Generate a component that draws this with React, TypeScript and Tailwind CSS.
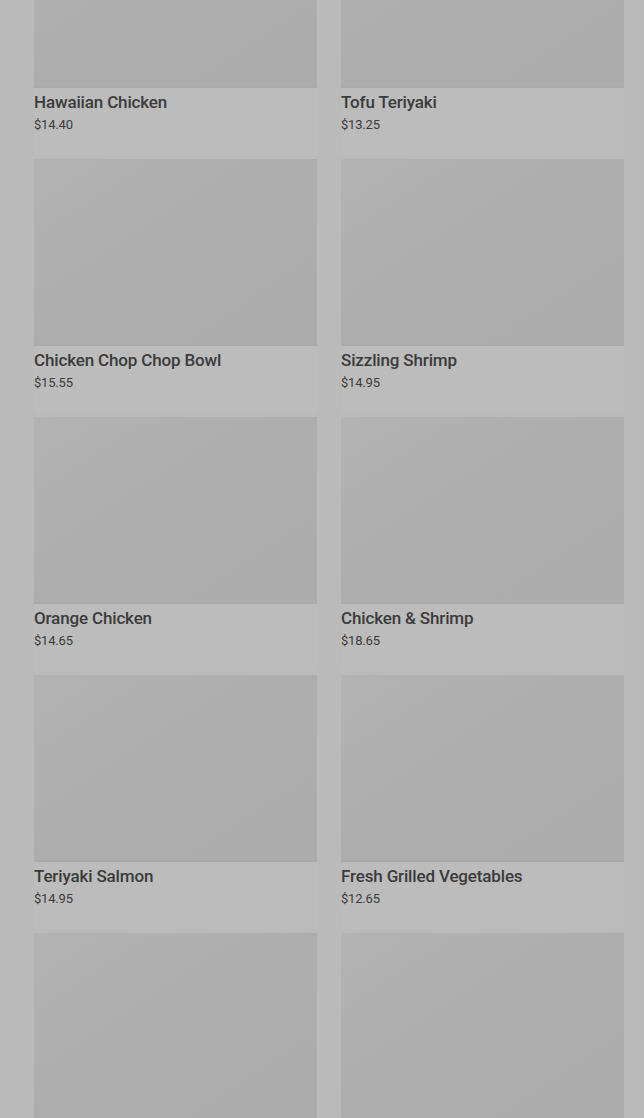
import React from "react";

const items = [
  { name: "Hawaiian Chicken", price: "$14.40" },
  { name: "Tofu Teriyaki", price: "$13.25" },
  { name: "Chicken Chop Chop Bowl", price: "$15.55" },
  { name: "Sizzling Shrimp", price: "$14.95" },
  { name: "Orange Chicken", price: "$14.65" },
  { name: "Chicken & Shrimp", price: "$18.65" },
  { name: "Teriyaki Salmon", price: "$14.95" },
  { name: "Fresh Grilled Vegetables", price: "$12.65" },
  { name: "", price: "" },
  { name: "", price: "" },
];

export default function App() {
  return (
    <div
      className="h-[1118px] overflow-hidden bg-[#bababa]"
      style={{ fontFamily: "Roboto, 'Liberation Sans', sans-serif" }}
    >
      <div className="mt-[-99px] grid grid-cols-2 gap-x-6 gap-y-1 pl-[34px] pr-5">
        {items.map((it, i) => (
          <div key={i} className="h-[254px] bg-[#bcbcbc]">
            <div className="h-[187px] border-b-2 border-[#aaaaaa] bg-gradient-to-br from-[#b3b3b3] via-[#adadad] to-[#acacac]" />
            {it.name && (
              <div className="pt-[3px]">
                <div className="text-[17px] leading-[22px] font-medium tracking-[-0.15px] text-[#3b3b3b]">
                  {it.name}
                </div>
                <div className="text-[13px] leading-[24px] tracking-[-0.2px] text-[#3b3b3b]">
                  {it.price}
                </div>
              </div>
            )}
          </div>
        ))}
      </div>
    </div>
  );
}
